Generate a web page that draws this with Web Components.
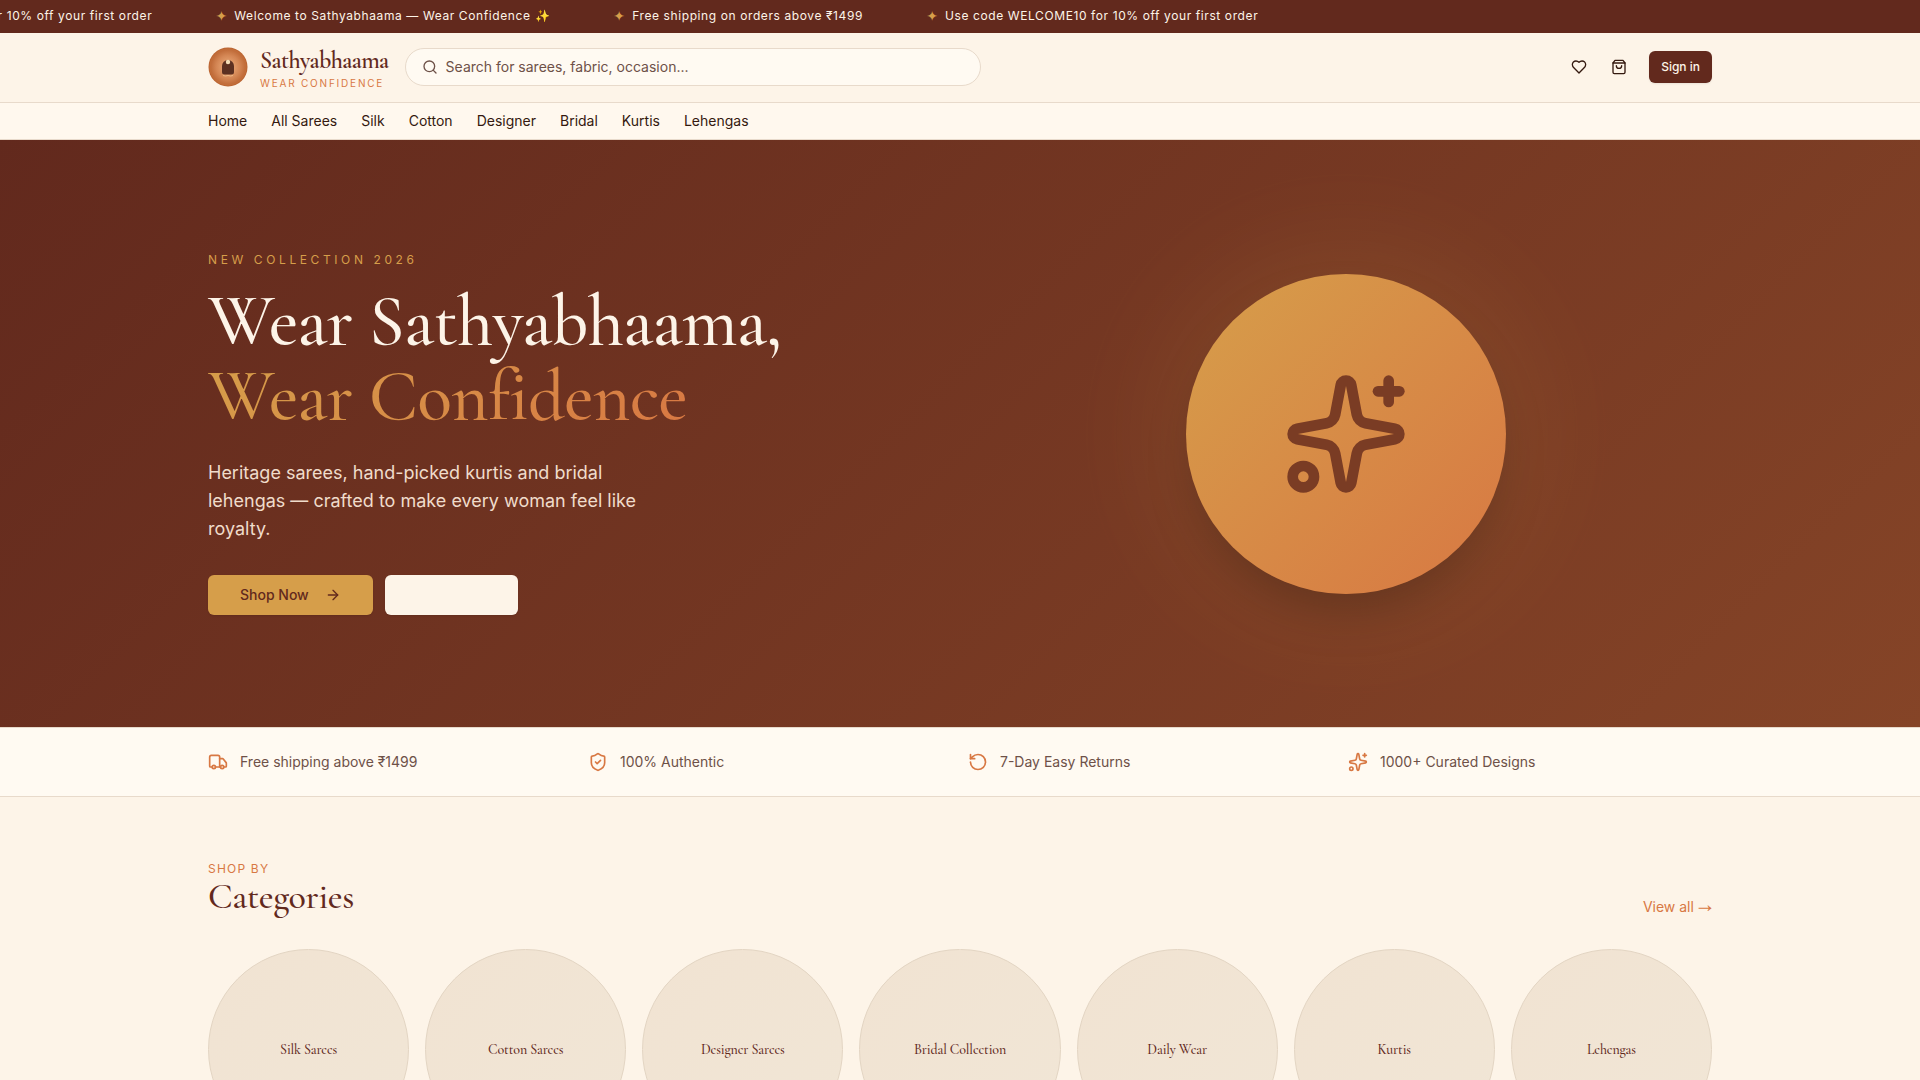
<!DOCTYPE html>
<html lang="en">
<head>
<meta charset="utf-8">
<meta name="viewport" content="width=device-width, initial-scale=1">
<title>Sathyabhaama — Wear Confidence</title>
<style>
:root{
  --maroon:#62291d; --cream:#fdf4e8; --card:#fffaf2; --nav:#fff8ee; --line:#e8dacb;
  --gold:#d69e4a; --coral:#d87843; --ink:#34190f; --muted:#6e5148;
  --serif:"Cormorant Garamond","Cormorant","EB Garamond","Liberation Serif",serif;
}
body{margin:0;background:var(--cream);color:var(--ink);font:14px/20px Inter,"Noto Sans",sans-serif}
</style>
</head>
<body>
<promo-ticker></promo-ticker>
<site-header></site-header>
<site-nav></site-nav>
<main>
  <hero-banner>
    <span slot="eyebrow">New Collection 2026</span>
    <span slot="title">Wear Sathyabhaama,</span>
    <span slot="lead">Heritage sarees, hand-picked kurtis and bridal lehengas — crafted to make every woman feel like royalty.</span>
  </hero-banner>
  <perk-strip>
    <perk-item icon="truck">Free shipping above ₹1499</perk-item>
    <perk-item icon="shield">100% Authentic</perk-item>
    <perk-item icon="rotate">7-Day Easy Returns</perk-item>
    <perk-item icon="sparkles">1000+ Curated Designs</perk-item>
  </perk-strip>
  <category-section>
    <category-tile>Silk Sarees</category-tile>
    <category-tile>Cotton Sarees</category-tile>
    <category-tile>Designer Sarees</category-tile>
    <category-tile>Bridal Collection</category-tile>
    <category-tile>Daily Wear</category-tile>
    <category-tile>Kurtis</category-tile>
    <category-tile>Lehengas</category-tile>
  </category-section>
</main>
<script>
const ICONS = {
  search:'<circle cx="11" cy="11" r="8"/><path d="m21 21-4.3-4.3"/>',
  heart:'<path d="M19 14c1.49-1.46 3-3.21 3-5.5A5.5 5.5 0 0 0 16.5 3c-1.76 0-3 .5-4.5 2-1.5-1.5-2.74-2-4.5-2A5.5 5.5 0 0 0 2 8.5c0 2.3 1.5 4.05 3 5.5l7 7Z"/>',
  bag:'<path d="M6 2 3 6v14a2 2 0 0 0 2 2h14a2 2 0 0 0 2-2V6l-3-4Z"/><path d="M3 6h18"/><path d="M16 10a4 4 0 0 1-8 0"/>',
  arrow:'<path d="M5 12h14"/><path d="m12 5 7 7-7 7"/>',
  truck:'<path d="M14 18V6a2 2 0 0 0-2-2H4a2 2 0 0 0-2 2v11a1 1 0 0 0 1 1h2"/><path d="M15 18H9"/><path d="M19 18h2a1 1 0 0 0 1-1v-3.65a1 1 0 0 0-.22-.624l-3.48-4.35A1 1 0 0 0 17.52 8H14"/><circle cx="17" cy="18" r="2"/><circle cx="7" cy="18" r="2"/>',
  shield:'<path d="M20 13c0 5-3.5 7.5-7.66 8.95a1 1 0 0 1-.67-.01C7.5 20.5 4 18 4 13V6a1 1 0 0 1 1-1c2 0 4.5-1.2 6.24-2.72a1.17 1.17 0 0 1 1.52 0C14.51 3.81 17 5 19 5a1 1 0 0 1 1 1z"/><path d="m9 12 2 2 4-4"/>',
  rotate:'<path d="M3 12a9 9 0 1 0 9-9 9.75 9.75 0 0 0-6.74 2.74L3 8"/><path d="M3 3v5h5"/>',
  sparkles:'<path d="M11.017 2.814a1 1 0 0 1 1.966 0l1.051 5.558a2 2 0 0 0 1.594 1.594l5.558 1.051a1 1 0 0 1 0 1.966l-5.558 1.051a2 2 0 0 0-1.594 1.594l-1.051 5.558a1 1 0 0 1-1.966 0l-1.051-5.558a2 2 0 0 0-1.594-1.594l-5.558-1.051a1 1 0 0 1 0-1.966l5.558-1.051a2 2 0 0 0 1.594-1.594z"/><path d="M20 2v4"/><path d="M22 4h-4"/><circle cx="4" cy="20" r="2"/>'
};
const WRAP = '.wrap{box-sizing:border-box;width:100%;max-width:1536px;margin:0 auto;padding-inline:16px}a{color:inherit;text-decoration:none}';
function component(name, css, html){
  customElements.define(name, class extends HTMLElement{
    constructor(){
      super();
      const render = typeof html === 'function' ? html(this) : html;
      this.attachShadow({mode:'open'}).innerHTML = `<style>:host{display:block}${css}</style>${render}`;
    }
  });
}

component('line-icon', ':host{display:inline-flex;flex:none}svg{display:block;width:var(--size,16px);height:var(--size,16px);fill:none;stroke:currentColor;stroke-width:2;stroke-linecap:round;stroke-linejoin:round}',
  el => `<svg viewBox="0 0 24 24" aria-hidden="true">${ICONS[el.getAttribute('name')]}</svg>`);

const offers = ['Welcome to Sathyabhaama — Wear Confidence ✨','Free shipping on orders above ₹1499','Use code WELCOME10 for 10% off your first order'];
component('promo-ticker', `
  :host{background:var(--maroon);color:var(--cream);overflow:hidden;padding:8px 0 9px;font-size:12px;line-height:16px;letter-spacing:.05em}
  .track{display:flex;gap:64px;width:max-content;white-space:nowrap;transform:translateX(-179px)}
  .track span{display:flex;gap:8px}
  i{display:flex;justify-content:center;width:10px;font:normal 14px/16px "DejaVu Sans",sans-serif;letter-spacing:0;color:var(--gold)}`,
  `<div class="track">${[offers[2],...offers].map(t=>`<span><i>✦</i>${t}</span>`).join('')}</div>`);

component('brand-mark', `
  a{display:flex;align-items:center;gap:12px;color:var(--maroon);text-decoration:none}
  svg{width:40px;height:40px;display:block}
  .text{padding-top:3px}
  .name{font:600 24px/30px var(--serif);letter-spacing:-.025em;white-space:nowrap}
  .tag{font-size:10px;line-height:15px;letter-spacing:.18em;color:var(--coral);text-transform:uppercase;white-space:nowrap}`,
  `<a href="#"><svg viewBox="0 0 40 40" aria-hidden="true">
    <defs><radialGradient id="g"><stop offset="0" stop-color="#eeb080"/><stop offset=".6" stop-color="#d48654"/><stop offset="1" stop-color="#b9622f"/></radialGradient></defs>
    <circle cx="20" cy="20" r="19.5" fill="url(#g)"/>
    <circle cx="20" cy="20" r="18" fill="none" stroke="#c9743f" stroke-width=".5"/>
    <path d="M14 19a6 6 0 0 1 12 0v6a2.500 2.500 0 0 1-2.500 2.500h-7A2.500 2.500 0 0 1 14 25z" fill="#5c3021"/>
    <circle cx="20" cy="15" r="2.200" fill="#f4dfb9"/>
    <path d="M15 28.500q2.500 1 5 0 2.500 1 5 0" fill="none" stroke="#efba86"/></svg>
    <div class="text"><div class="name">Sathyabhaama</div><div class="tag">Wear Confidence</div></div></a>`);

component('site-header', WRAP+`
  :host{background:var(--cream);border-bottom:1px solid var(--line)}
  .wrap{display:flex;align-items:center;gap:16px;padding-block:10px 11px}
  .search{box-sizing:border-box;display:flex;align-items:center;gap:8px;flex:0 1 576px;height:38px;padding:0 16px;border:1px solid var(--line);border-radius:19px;background:var(--card);color:var(--muted)}
  input{flex:1;min-width:0;border:0;outline:0;padding:0;background:none;font:inherit;color:inherit}
  input::placeholder{color:var(--muted);opacity:1}
  .actions{display:flex;align-items:center;gap:4px;margin-left:auto}
  button{border:0;background:none;color:var(--ink);padding:0;font:inherit;cursor:pointer}
  .icon{display:grid;place-items:center;width:36px;height:36px}
  .sign{margin-left:8px;height:32px;padding:0 12px;border-radius:6px;background:var(--maroon);color:var(--cream);font-size:12px;font-weight:500;box-shadow:0 1px 2px rgb(0 0 0/.08)}`,
  `<header class="wrap"><brand-mark></brand-mark>
   <label class="search"><line-icon name="search"></line-icon><input type="search" aria-label="Search" placeholder="Search for sarees, fabric, occasion..."></label>
   <div class="actions"><button class="icon" aria-label="Wishlist"><line-icon name="heart"></line-icon></button><button class="icon" aria-label="Bag"><line-icon name="bag"></line-icon></button><button class="sign">Sign in</button></div></header>`);

component('site-nav', WRAP+`
  :host{background:var(--nav);border-bottom:1px solid var(--line)}
  .wrap{display:flex;gap:24px;padding-block:8px}`,
  `<nav class="wrap">${['Home','All Sarees','Silk','Cotton','Designer','Bridal','Kurtis','Lehengas'].map(t=>`<a href="#">${t}</a>`).join('')}</nav>`);

component('hero-banner', WRAP+`
  :host{background:linear-gradient(135deg,#62291d,#854427);color:var(--cream)}
  .wrap{display:grid;grid-template-columns:1fr 1fr;gap:40px;align-items:center;padding-block:112px}
  .eyebrow{margin:0 0 16px;font-size:12px;line-height:16px;letter-spacing:.3em;text-transform:uppercase;color:var(--gold)}
  h1{margin:0;font:500 72px/75px var(--serif);letter-spacing:-.01em}
  h1 span{display:block;width:max-content}
  .accent{background:linear-gradient(135deg,var(--gold),var(--coral));background-clip:text;-webkit-background-clip:text;color:transparent}
  .lead{margin:25px 0 32px;max-width:448px;font-size:18px;line-height:28px;color:#f0dccb}
  .cta{display:flex;gap:12px}
  button{display:flex;align-items:center;gap:16px;height:40px;padding:0 32px;border:0;border-radius:6px;background:var(--gold);color:var(--maroon);font:500 14px/20px Inter,sans-serif;box-shadow:0 1px 2px rgb(0 0 0/.1)}
  .plain{background:var(--cream);min-width:133px}
  .art{display:grid;place-items:center}
  .art>*{grid-area:1/1;width:320px;height:320px;border-radius:50%;background:linear-gradient(135deg,var(--gold),var(--coral))}
  .glow{filter:blur(64px);opacity:.2;background:var(--gold)}
  .disc{position:relative;display:grid;place-items:center;color:#7a3c24;box-shadow:0 25px 50px -12px rgb(0 0 0/.25);--size:128px}`,
  `<section class="wrap"><div>
    <p class="eyebrow"><slot name="eyebrow"></slot></p>
    <h1><span><slot name="title"></slot></span><span class="accent">Wear Confidence</span></h1>
    <p class="lead"><slot name="lead"></slot></p>
    <div class="cta"><button>Shop Now<line-icon name="arrow"></line-icon></button><button class="plain" aria-label="Bridal"></button></div>
   </div><div class="art"><div class="glow"></div><div class="disc"><line-icon name="sparkles"></line-icon></div></div></section>`);

component('perk-item', ':host{display:flex;align-items:center;gap:12px;color:var(--muted)}line-icon{--size:20px;color:var(--coral)}',
  el => `<line-icon name="${el.getAttribute('icon')}"></line-icon><span><slot></slot></span>`);
component('perk-strip', WRAP+`
  :host{background:var(--card);border-block:1px solid var(--line)}
  .wrap{display:grid;grid-template-columns:repeat(4,1fr);gap:16px;padding-block:24px}`,
  '<div class="wrap"><slot></slot></div>');

component('category-tile', `
  a{box-sizing:border-box;display:grid;place-items:center;aspect-ratio:1;border:1px solid #e3d5c3;border-radius:50%;background:linear-gradient(135deg,#f1e3d2,#f1e6d6);color:var(--maroon);text-decoration:none;font:500 14px/20px var(--serif);letter-spacing:-.01em}`,
  '<a href="#"><slot></slot></a>');
component('category-section', WRAP+`
  .wrap{padding-block:64px}
  .head{display:flex;align-items:flex-end;justify-content:space-between;margin-bottom:32px}
  .kicker{font-size:12px;line-height:16px;letter-spacing:.1em;color:var(--coral);text-transform:uppercase}
  h2{margin:0;font:500 36px/40px var(--serif);letter-spacing:-.01em;color:var(--maroon)}
  .all{color:var(--coral)}
  .all span{font-family:"Noto Sans Math","Noto Sans CJK JP",sans-serif;line-height:1}
  .grid{display:grid;grid-template-columns:repeat(7,1fr);gap:16px}`,
  `<section class="wrap"><div class="head"><div><div class="kicker">Shop by</div><h2>Categories</h2></div><a class="all" href="#">View all <span>→</span></a></div><div class="grid"><slot></slot></div></section>`);
</script>
</body>
</html>
